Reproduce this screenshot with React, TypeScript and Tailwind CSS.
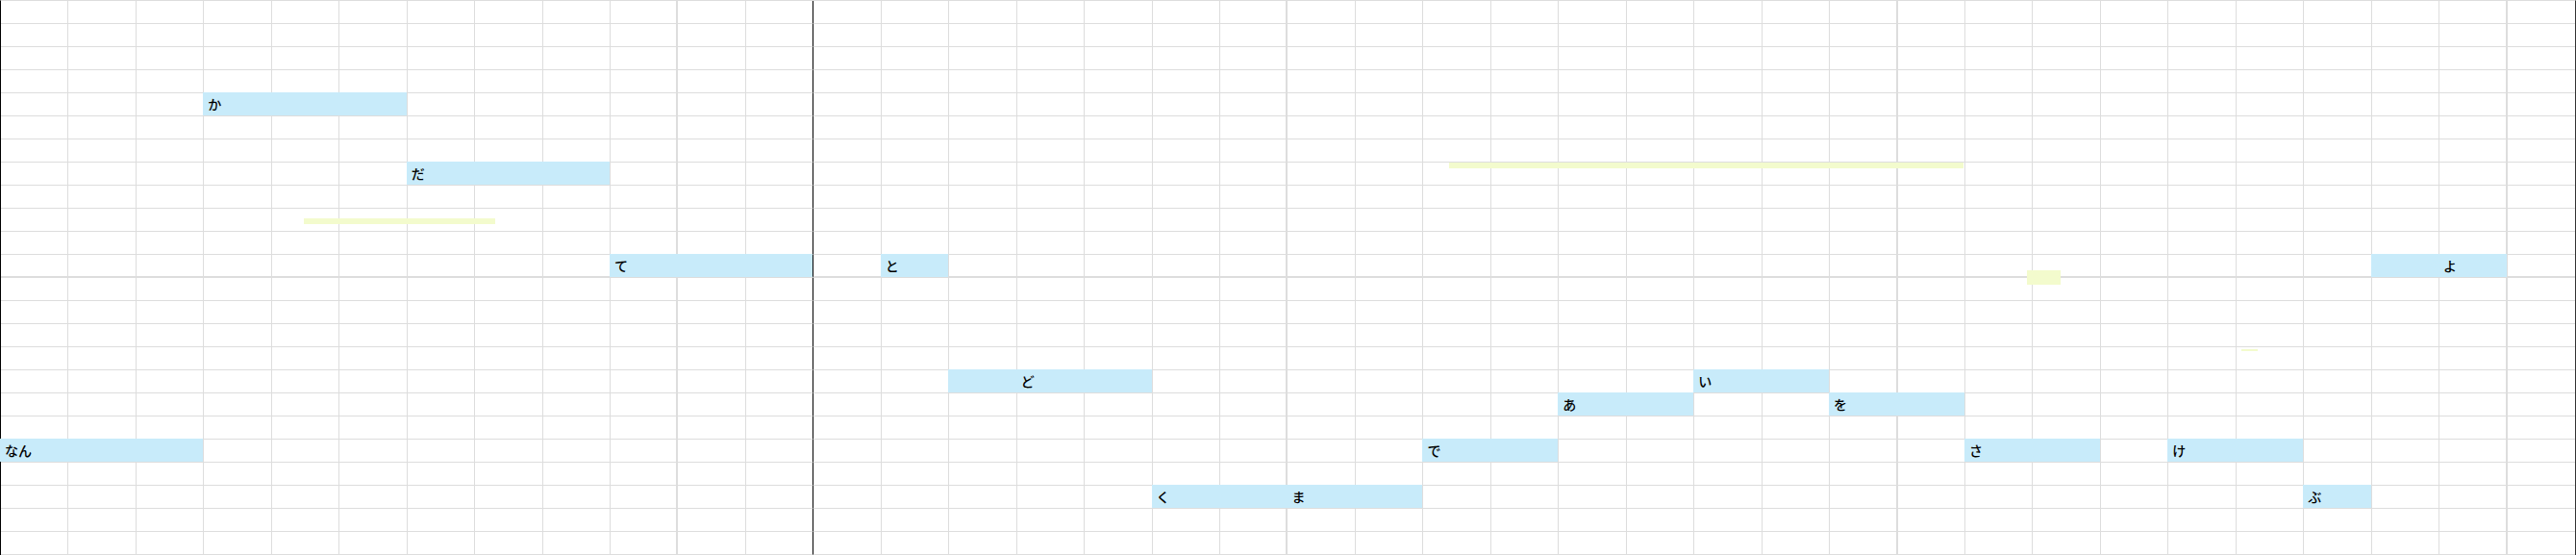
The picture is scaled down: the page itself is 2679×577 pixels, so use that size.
const COLS = 38;
const ROWS = 24;
const W = 2677 / COLS;
const H = 24;

type Note = { c: number; r: number; n: number; labels: Record<number, string> };

const notes: Note[] = [
  { c: 3, r: 4, n: 3, labels: { 0: "か" } },
  { c: 6, r: 7, n: 3, labels: { 0: "だ" } },
  { c: 9, r: 11, n: 3, labels: { 0: "て" } },
  { c: 13, r: 11, n: 1, labels: { 0: "と" } },
  { c: 35, r: 11, n: 2, labels: { 1: "よ" } },
  { c: 14, r: 16, n: 3, labels: { 1: "ど" } },
  { c: 25, r: 16, n: 2, labels: { 0: "い" } },
  { c: 23, r: 17, n: 2, labels: { 0: "あ" } },
  { c: 27, r: 17, n: 2, labels: { 0: "を" } },
  { c: 0, r: 19, n: 3, labels: { 0: "なん" } },
  { c: 21, r: 19, n: 2, labels: { 0: "で" } },
  { c: 29, r: 19, n: 2, labels: { 0: "さ" } },
  { c: 32, r: 19, n: 2, labels: { 0: "け" } },
  { c: 17, r: 21, n: 4, labels: { 0: "く", 2: "ま" } },
  { c: 34, r: 21, n: 1, labels: { 0: "ぶ" } },
];

// pitch curve fragments (x, y, w, h)
const curves = [
  [316, 227, 199, 6],
  [1507, 169, 535, 6],
  [2108, 281, 35, 15],
  [2331, 363, 17, 2],
];

function Cell({ r, c }: { r: number; c: number }) {
  const bottom = r === 11 ? "border-b-2" : "border-b";
  let right = "border-r border-r-[#dddddd]";
  if (c === 11) right = "border-r border-r-black";
  else if (c === 9 || c === 18 || c === 27 || c === 36) right = "border-r-2 border-r-[#dddddd]";
  if (c === COLS - 1) right = "";
  return <div className={`${bottom} border-b-[#dddddd] ${right} h-full`} />;
}

export default function App() {
  return (
    <div className="relative w-[2679px] h-[577px] bg-white overflow-hidden font-['Noto_Sans_CJK_JP',sans-serif]">
      <div className="w-full h-full border-l border-l-black border-t border-t-[#dddddd] border-r border-r-[#333333] flex flex-col">
        {Array.from({ length: ROWS }).map((_, r) => (
          <div key={r} className="grid grid-cols-[repeat(38,minmax(0,1fr))] h-[24px] shrink-0">
            {Array.from({ length: COLS }).map((_, c) => (
              <Cell key={c} r={r} c={c} />
            ))}
          </div>
        ))}
      </div>

      {curves.map(([x, y, w, h], i) => (
        <div
          key={i}
          className="absolute bg-[#f3fbcd]"
          style={{ left: x, top: y, width: w, height: h }}
        />
      ))}

      {notes.map((n, i) => (
        <div
          key={i}
          className="absolute flex bg-[#c8ebfa]"
          style={{ left: n.c * W, top: n.r * H, width: n.n * W, height: H }}
        >
          {Array.from({ length: n.n }).map((_, k) => (
            <div key={k} className="flex-1 flex items-center pl-[5px] text-[14px] font-medium text-black leading-none">
              {n.labels[k] ?? ""}
            </div>
          ))}
        </div>
      ))}
    </div>
  );
}
